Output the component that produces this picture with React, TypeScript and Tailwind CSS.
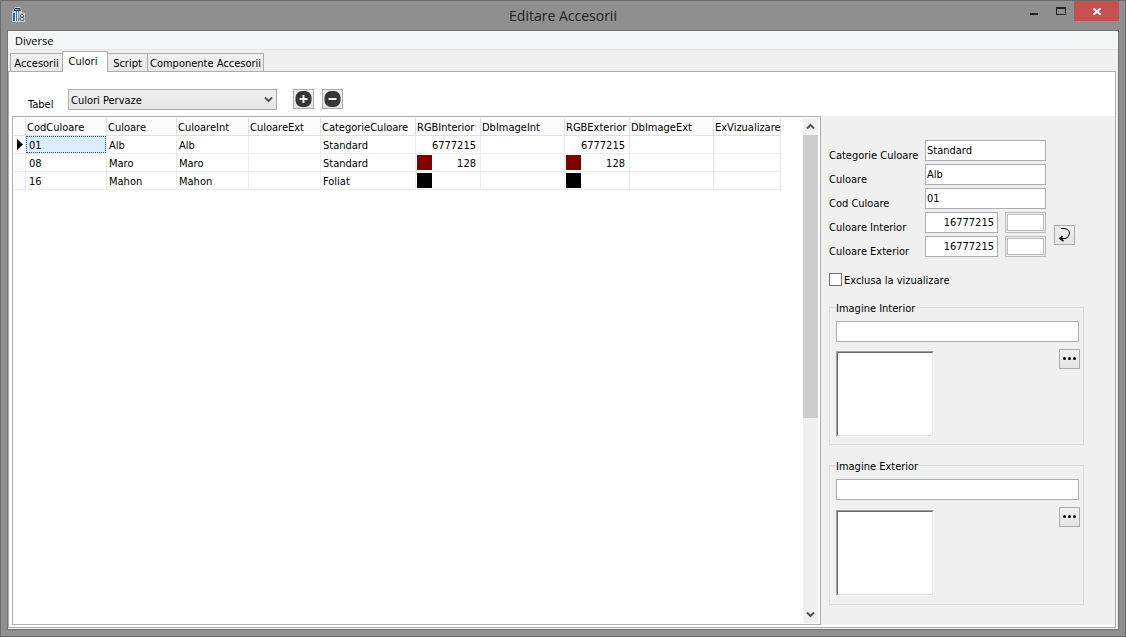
import React, { useState } from "react";

type ColorRow = {
  cod: string;
  culoare: string;
  interior: string;
  exterior: string;
  categorie: string;
  rgbInt: string;
  rgbExt: string;
  swatch: string;
};

const rows: ColorRow[] = [
  { cod: "01", culoare: "Alb", interior: "Alb", exterior: "", categorie: "Standard", rgbInt: "16777215", rgbExt: "16777215", swatch: "bg-white" },
  { cod: "08", culoare: "Maro", interior: "Maro", exterior: "", categorie: "Standard", rgbInt: "128", rgbExt: "128", swatch: "bg-[#800000]" },
  { cod: "16", culoare: "Mahon", interior: "Mahon", exterior: "", categorie: "Foliat", rgbInt: "", rgbExt: "", swatch: "bg-black" },
];

const headers = [
  "CodCuloare",
  "Culoare",
  "CuloareInt",
  "CuloareExt",
  "CategorieCuloare",
  "RGBInterior",
  "DbImageInt",
  "RGBExterior",
  "DbImageExt",
  "ExVizualizare",
];

const tabs = ["Accesorii", "Culori", "Script", "Componente Accesorii"];
const tabWidths = ["w-[53px]", "w-[46px]", "w-[40px]", "w-[116px]"];

const field = "h-[21px] border border-[#abadb3] bg-white pl-px pr-[3px] pb-px outline-none";
const fieldLabel = "pt-[11px] leading-[10px]";
const toolButton =
  "flex h-5 w-[21px] shrink-0 items-center justify-center border border-[#acacac] bg-linear-to-b from-[#f0f0f0] to-[#e5e5e5]";

function AppIcon() {
  return (
    <svg width="14" height="16" viewBox="0 0 14 16" aria-hidden="true">
      <defs>
        <linearGradient id="pillar" x1="0" x2="1">
          <stop offset="0" stopColor="#0b2a52" />
          <stop offset="0.5" stopColor="#e4f4fc" />
          <stop offset="1" stopColor="#17629c" />
        </linearGradient>
      </defs>
      <path d="M0 5 L3 0 H8 L10 4 V6 H13 V15 H0Z" fill="#c9d0d3" />
      <path d="M1 5 L3 1 H8 L9 4 H1Z" fill="#173348" />
      <path d="M3 2 H7 L8 3 H3Z" fill="#8fb4c6" />
      <path d="M1 6 H3 V14 H1Z" fill="#1d6ba3" />
      <path d="M3 5 H4 V14 H3Z" fill="#e6f1f5" />
      <path d="M4 4 H7 V14 H4Z" fill="url(#pillar)" />
      <ellipse cx="10" cy="8.8" rx="1.6" ry="1.5" fill="#ddd" stroke="#555" />
      <ellipse cx="10" cy="12" rx="2" ry="1.7" fill="#ddd" stroke="#555" />
    </svg>
  );
}

function Chevron({ up = false }: { up?: boolean }) {
  return (
    <svg width="9" height="7" viewBox="0 0 9 7" aria-hidden="true">
      <path d={up ? "M1 5.5 L4.5 2 L8 5.5" : "M1 1.5 L4.5 5 L8 1.5"} fill="none" stroke="#555" strokeWidth="2" />
    </svg>
  );
}

function RoundIcon({ plus = false }: { plus?: boolean }) {
  return (
    <svg width="17" height="16" viewBox="0 0 17 16" aria-hidden="true">
      <rect x="0.5" width="16" height="16" rx="6.5" fill="#363636" />
      <path d={plus ? "M4.5 8 H12.5 M8.5 4 V12" : "M4.5 8 H12.5"} stroke="#f2f2f2" strokeWidth="2" />
    </svg>
  );
}

function RgbCell({ value, swatch }: { value: string; swatch: string }) {
  return (
    <div className="relative h-[17px] pt-[2px] pr-1 text-right">
      {value}
      <span className={`absolute top-px left-px size-[15px] ${swatch}`} />
    </div>
  );
}

function ImageGroup({ title, id, tall = false }: { title: string; id: string; tall?: boolean }) {
  return (
    <fieldset className={`w-[255px] border border-[#dcdcdc] pr-1 pl-[6px] ${tall ? "h-[147px]" : "h-[145px]"}`}>
      <legend className="pt-[3px] pr-px leading-[12px]">
        <label htmlFor={id}>{title}</label>
      </legend>
      <input id={id} className={`${field} mt-[6px] block w-full`} />
      <div className="-mr-px flex items-start justify-between pt-[7px]">
        <div
          className={`h-[86px] w-[98px] border border-t-[#a0a0a0] border-r-white border-b-white border-l-[#a0a0a0] ${tall ? "mt-[3px]" : "mt-[2px]"}`}
        >
          <div className="h-full border border-t-[#696969] border-r-[#e3e3e3] border-b-[#e3e3e3] border-l-[#696969] bg-white" />
        </div>
        <button aria-label={`Alege ${title}`} className={toolButton}>
          <svg width="13" height="5" viewBox="0 0 13 5" aria-hidden="true">
            <circle cx="1.5" cy="1.5" r="1.5" />
            <circle cx="6.5" cy="1.5" r="1.5" />
            <circle cx="11.5" cy="1.5" r="1.5" />
          </svg>
        </button>
      </div>
    </fieldset>
  );
}

export default function App() {
  const [active, setActive] = useState("Culori");
  const [selected, setSelected] = useState(0);

  return (
    <div className="flex h-screen w-full flex-col overflow-hidden border border-[#6b6b6b] bg-[#8f8f8f] px-[6px] pb-[6px] font-['DejaVu_Sans_Condensed','DejaVu_Sans',sans-serif] text-[11px] leading-[15px] text-black">
      <header className="flex h-[29px] shrink-0 items-start">
        <div className="w-[120px] pt-[6px] pl-[5px]">
          <AppIcon />
        </div>
        <h1 className="flex-1 text-center text-[14px] leading-[29px] text-[#222] [font-family:'Open_Sans',sans-serif]">
          Editare Accesorii
        </h1>
        <div className="flex w-[120px] justify-end">
          <button aria-label="Minimizare" className="flex h-5 w-[27px] items-center justify-center">
            <svg width="8" height="12" viewBox="0 0 8 12" aria-hidden="true">
              <path d="M0 8 H8 V10 H0Z" fill="#222" />
            </svg>
          </button>
          <button aria-label="Maximizare" className="flex h-5 w-[27px] items-center justify-center">
            <svg width="10" height="8" viewBox="0 0 10 8" aria-hidden="true">
              <path d="M0 0 H10 V8 H0Z M1 2 V7 H9 V2Z" fill="#222" fillRule="evenodd" />
            </svg>
          </button>
          <button aria-label="Închidere" className="flex h-5 w-[45px] items-center justify-center bg-[#c75050]">
            <svg width="8" height="7" viewBox="0 0 8 7" aria-hidden="true">
              <path d="M.5 .3 L7.5 6.7 M7.5 .3 L.5 6.7" stroke="#fff" strokeWidth="1.9" />
            </svg>
          </button>
        </div>
      </header>

      <div className="flex min-h-0 flex-1 flex-col border border-[#737373] bg-[#f0f0f0]">
        <nav className="flex h-[19px] shrink-0 border-b border-[#e6e6e6] bg-[#f5f6f7] pl-[7px]">
          <button className="text-[11px] leading-[19px] [font-family:'Open_Sans',sans-serif]">Diverse</button>
        </nav>

        <div role="tablist" className="flex h-[21px] shrink-0 items-end pl-[2px]">
          {tabs.map((tab, i) => (
            <button
              key={tab}
              role="tab"
              aria-selected={tab === active}
              onClick={() => setActive(tab)}
              className={`${tabWidths[i]} shrink-0 border border-b-0 border-[#acacac] whitespace-nowrap ${
                tab === active
                  ? "relative z-10 -mb-px -ml-px h-[21px] bg-white pr-1 pb-px"
                  : "h-[18px] bg-linear-to-b from-[#f0f0f0] to-[#e8e8e8] pt-px not-first:border-l-0"
              }`}
            >
              {tab}
            </button>
          ))}
        </div>

        <main className="mr-[2px] mb-px flex min-h-0 flex-1 flex-col border border-[#acacac] bg-white pb-[2px]">
          <div className="flex h-11 shrink-0 items-start pt-[17px] pl-[19px]">
            <label htmlFor="tabel" className="w-10 pt-2">
              Tabel
            </label>
            <div className="relative">
              <select
                id="tabel"
                className="block h-[21px] w-[209px] appearance-none border border-[#acacac] bg-linear-to-b from-[#f0f0f0] to-[#e5e5e5] px-[2px] pt-px outline-none"
              >
                <option>Culori Pervaze</option>
              </select>
              <span className="pointer-events-none absolute top-[7px] right-1">
                <Chevron />
              </span>
            </div>
            <button aria-label="Adauga" className={`${toolButton} ml-4`}>
              <RoundIcon plus />
            </button>
            <button aria-label="Sterge" className={`${toolButton} ml-2`}>
              <RoundIcon />
            </button>
          </div>

          <div className="flex min-h-0 flex-1 pl-[3px]">
            <section className="flex min-w-0 flex-1 border border-[#abadb3] py-px pr-[2px] pl-px">
              <div className="min-w-0 flex-1 overflow-hidden">
                <table className="w-[767px] table-fixed border-separate border-spacing-0">
                  <colgroup>
                    <col className="w-[12px]" />
                    <col className="w-[81px]" />
                    <col className="w-[70px]" />
                    <col className="w-[72px]" />
                    <col className="w-[72px]" />
                    <col className="w-[95px]" />
                    <col className="w-[65px]" />
                    <col className="w-[84px]" />
                    <col className="w-[65px]" />
                    <col className="w-[84px]" />
                    <col className="w-[67px]" />
                  </colgroup>
                  <thead>
                    <tr className="h-[18px]">
                      <td className="border-r border-b border-[#e0e0e0] bg-[#fcfcfc] p-0" />
                      {headers.map((h) => (
                        <th
                          key={h}
                          scope="col"
                          className="border-r border-b border-[#e0e0e0] bg-[#fcfcfc] p-0 pt-[2px] pl-px text-left font-normal whitespace-nowrap"
                        >
                          {h}
                        </th>
                      ))}
                    </tr>
                  </thead>
                  <tbody className="[&_td]:border-r [&_td]:border-b [&_td]:border-[#ececec] [&_td]:p-0">
                    {rows.map((r, i) => (
                      <tr key={r.cod} className="h-[18px]" onClick={() => setSelected(i)}>
                        <td className="bg-[#fcfcfc]">
                          {i === selected && (
                            <svg className="ml-[3px]" width="6" height="11" viewBox="0 0 6 11" aria-hidden="true">
                              <path d="M0 0 L6 5.5 L0 11Z" />
                            </svg>
                          )}
                        </td>
                        <td>
                          <div
                            className={`h-[17px] border pt-px pl-[2px] ${
                              i === selected ? "border-dotted border-[#1c4f7c] bg-[#dbeeff]" : "border-transparent"
                            }`}
                          >
                            {r.cod}
                          </div>
                        </td>
                        <td>
                          <div className="pt-[2px] pl-[2px]">{r.culoare}</div>
                        </td>
                        <td>
                          <div className="pt-[2px] pl-[2px]">{r.interior}</div>
                        </td>
                        <td>{r.exterior}</td>
                        <td>
                          <div className="pt-[2px] pl-[2px]">{r.categorie}</div>
                        </td>
                        <td>
                          <RgbCell value={r.rgbInt} swatch={r.swatch} />
                        </td>
                        <td />
                        <td>
                          <RgbCell value={r.rgbExt} swatch={r.swatch} />
                        </td>
                        <td />
                        <td />
                      </tr>
                    ))}
                  </tbody>
                </table>
              </div>
              <div className="flex w-[15px] shrink-0 flex-col items-center bg-[#f0f0f0]">
                <div className="flex h-[17px] items-center">
                  <Chevron up />
                </div>
                <div className="h-[283px] w-full shrink-0 bg-[#cdcdcd]" />
                <div className="flex-1" />
                <div className="flex h-[17px] items-center">
                  <Chevron />
                </div>
              </div>
            </section>

            <aside className="w-[294px] shrink-0 bg-[#f0f0f0] pt-6 pl-2">
              <div className="flex items-center">
                <div className="grid grid-cols-[96px_73px_48px] gap-y-[3px]">
                  <label htmlFor="categorie" className={fieldLabel}>
                    Categorie Culoare
                  </label>
                  <input id="categorie" defaultValue="Standard" className={`${field} col-span-2 w-full`} />
                  <label htmlFor="culoare" className={fieldLabel}>
                    Culoare
                  </label>
                  <input id="culoare" defaultValue="Alb" className={`${field} col-span-2 w-full`} />
                  <label htmlFor="cod" className={fieldLabel}>
                    Cod Culoare
                  </label>
                  <input id="cod" defaultValue="01" className={`${field} col-span-2 w-full`} />
                  <label htmlFor="interior" className={fieldLabel}>
                    Culoare Interior
                  </label>
                  <input id="interior" defaultValue="16777215" className={`${field} w-full text-right`} />
                  <div className="ml-[7px] h-[21px] border border-[#bcbcbc] p-px">
                    <div className="h-full border border-[#bcbcbc] bg-white" />
                  </div>
                  <label htmlFor="exterior" className={fieldLabel}>
                    Culoare Exterior
                  </label>
                  <input id="exterior" defaultValue="16777215" className={`${field} w-full text-right`} />
                  <div className="ml-[7px] h-[21px] border border-[#bcbcbc] p-px">
                    <div className="h-full border border-[#bcbcbc] bg-white" />
                  </div>
                </div>
                <button aria-label="Copiaza culoarea" className={`${toolButton} mt-[72px] ml-2`}>
                  <svg width="13" height="15" viewBox="0 0 13 15" fill="none" stroke="#000" aria-hidden="true">
                    <path d="M3 1.5 H6 Q11 2 11.5 6 Q11.5 9.5 8 11.5 H2" />
                    <path d="M4.5 9.2 L2 11.5 L5.5 14" strokeWidth="1.6" />
                  </svg>
                </button>
              </div>

              <label className="mt-[15px] mb-[13px] flex h-[15px] items-center gap-[2px]">
                <input
                  type="checkbox"
                  className="size-[13px] shrink-0 appearance-none border border-[#707070] bg-white checked:bg-[#333]"
                />
                <span className="pt-px">Exclusa la vizualizare</span>
              </label>

              <ImageGroup title="Imagine Interior" id="img-interior" />
              <div className="h-[13px]" />
              <ImageGroup title="Imagine Exterior" id="img-exterior" tall />
            </aside>
          </div>
        </main>
      </div>
    </div>
  );
}
